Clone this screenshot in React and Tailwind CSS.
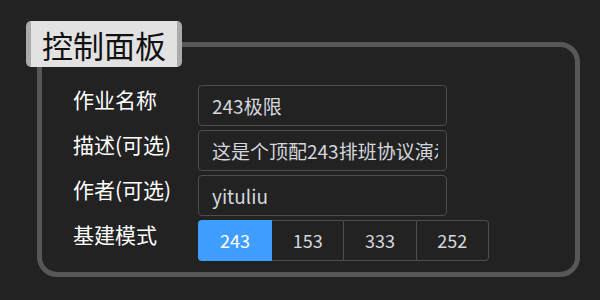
import React from "react";

const fields = [
  { label: "作业名称", value: "243极限" },
  { label: "描述(可选)", value: "这是个顶配243排班协议演示" },
  { label: "作者(可选)", value: "yituliu" },
];

const modes = ["243", "153", "333", "252"];

export default function App() {
  const active = "243";

  return (
    <div
      className="h-[300px] w-[600px] overflow-hidden bg-[#222222] pt-[42px] pl-[37px]"
      style={{ fontFamily: '"Noto Sans CJK SC", "Noto Sans", sans-serif' }}
    >
      <div className="relative h-[235px] w-[543px] rounded-[20px] border-[5px] border-[#575757] pt-[38px] pl-[31px]">
        {/* panel title sits over the top-left corner */}
        <div className="absolute -left-[16px] -top-[26px] flex h-[46px] w-[156px] items-center justify-center rounded-[5px] border-x-[5px] border-[#ababab] bg-[#e2e2e2] text-[31px] leading-none text-[#111111]">
          控制面板
        </div>

        <div className="grid grid-cols-[125px_auto] gap-y-[4px]">
          {fields.map((f) => (
            <React.Fragment key={f.label}>
              <div className="text-[21px] leading-[28px] text-white">{f.label}</div>
              <input
                readOnly
                value={f.value}
                className="h-[41px] w-[249px] rounded-[4px] border border-[#4c4d4f] bg-[#222222] pl-[13px] pr-[8px] text-[19px] text-[#d4d7de] outline-none"
              />
            </React.Fragment>
          ))}

          <div className="text-[21px] leading-[28px] text-white">基建模式</div>
          <div className="flex h-[41px] w-[291px]">
            {modes.map((m, i) => (
              <div
                key={m}
                className={clsxLite(
                  "flex items-center justify-center text-[18px]",
                  m === active
                    ? "w-[74px] bg-[#409eff] text-white"
                    : "flex-1 border-y border-r border-[#4c4d4f] text-[#d4d7de]",
                  i === 0 ? "rounded-l-[4px]" : "",
                  i === modes.length - 1 ? "rounded-r-[4px]" : ""
                )}
              >
                {m}
              </div>
            ))}
          </div>
        </div>
      </div>
    </div>
  );
}

function clsxLite(...parts) {
  return parts.filter(Boolean).join(" ");
}
